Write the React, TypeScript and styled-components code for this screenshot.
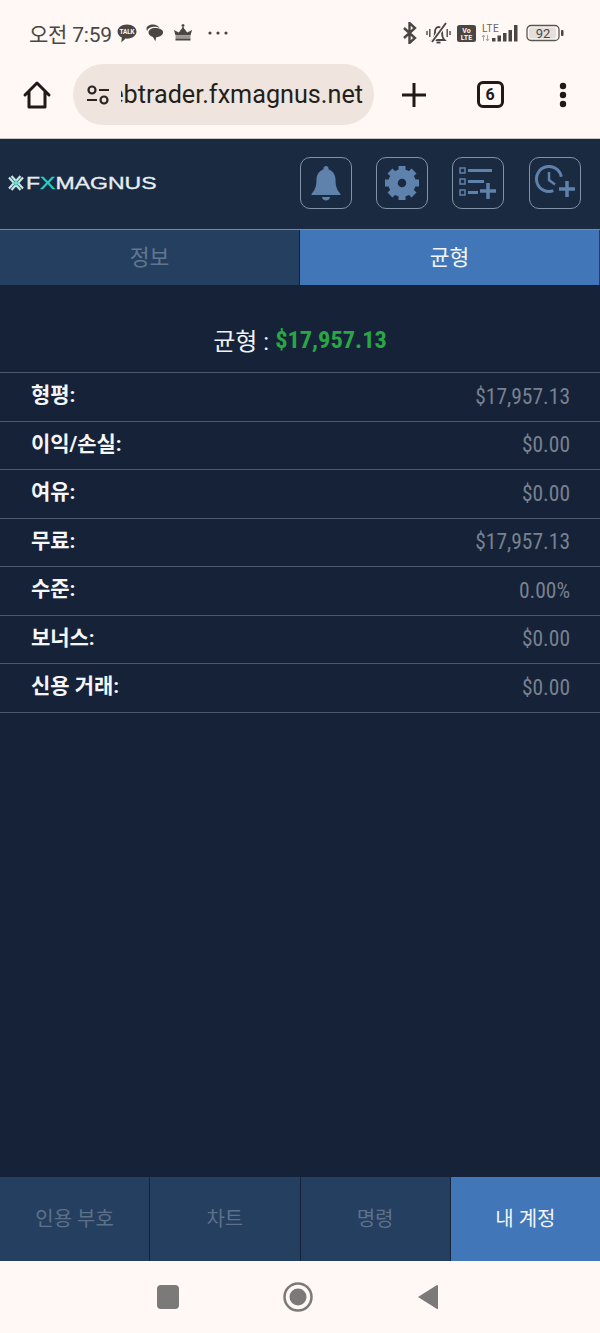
import styled, { createGlobalStyle } from "styled-components";

const GlobalStyle = createGlobalStyle`
  html, body {
    margin: 0;
    padding: 0;
    background: #fff8f5;
  }
  body {
    font-family: Roboto, "Noto Sans CJK KR", sans-serif;
  }
`;

const Page = styled.div`
  width: 600px;
  height: 1333px;
  display: flex;
  flex-direction: column;
  overflow: hidden;
  background: #162238;
`;

const StatusBar = styled.div`
  height: 64px;
  flex: none;
  box-sizing: border-box;
  padding: 2px 35px 0 29px;
  background: #fff8f5;
  display: flex;
  align-items: center;
  justify-content: space-between;
  color: #4a4644;
`;

const StatusGroup = styled.div`
  display: flex;
  align-items: center;
`;

const Clock = styled.span`
  font-size: 21px;
  letter-spacing: -0.2px;
  margin-right: 3px;
  white-space: nowrap;
`;

const BrowserBar = styled.div`
  height: 75px;
  flex: none;
  box-sizing: border-box;
  background: #fff8f5;
  border-bottom: 1px solid #c9c6c4;
  padding-bottom: 13px;
  display: flex;
  align-items: center;
`;

const HomeSlot = styled.div`
  width: 73px;
  flex: none;
  display: flex;
  justify-content: center;
`;

const UrlPill = styled.div`
  width: 301px;
  height: 61px;
  flex: none;
  box-sizing: border-box;
  border-radius: 31px;
  background: #efe5de;
  padding: 0 11px 0 12px;
  display: flex;
  align-items: center;
`;

const UrlText = styled.div`
  flex: 1;
  min-width: 0;
  margin-left: 10px;
  overflow: hidden;
  white-space: nowrap;
  direction: rtl;
  font-size: 25.2px;
  color: #241f1c;
  text-align: left;
`;

const BrowserAction = styled.div<{ $width: number }>`
  width: ${(p) => p.$width}px;
  flex: none;
  display: flex;
  justify-content: center;
`;

const TabCount = styled.div`
  width: 27px;
  height: 27px;
  box-sizing: border-box;
  border: 3px solid #1f1a17;
  border-radius: 6px;
  font-size: 16px;
  font-weight: 700;
  color: #1f1a17;
  display: flex;
  align-items: center;
  justify-content: center;
`;

const Header = styled.div`
  height: 90px;
  flex: none;
  box-sizing: border-box;
  background: #1a2a41;
  padding: 0 19.2px 2px 8px;
  display: flex;
  align-items: center;
  justify-content: space-between;
`;

const Logo = styled.div`
  display: flex;
  align-items: center;
  gap: 2px;
  font-family: "Liberation Sans", Arial, sans-serif;
`;

const LogoWord = styled.span`
  font-size: 18px;
  color: #e6edf1;
  -webkit-text-stroke: 0.35px currentColor;
  display: inline-block;
  transform-origin: left center;
  transform: scale(1.28, 0.95);
  white-space: nowrap;
`;

const LogoX = styled.span`
  color: #2fcfc0;
`;

const HeaderButtons = styled.div`
  display: flex;
  gap: 24.4px;
`;

const HeaderButton = styled.div`
  width: 52px;
  height: 52px;
  box-sizing: border-box;
  border: 1px solid #8292a5;
  border-radius: 10px;
  display: flex;
  align-items: center;
  justify-content: center;
`;

const TabRow = styled.div`
  height: 56px;
  flex: none;
  box-sizing: border-box;
  border-top: 1px solid #7f8b9a;
  display: flex;
`;

const Tab = styled.div<{ $active?: boolean }>`
  flex: 1;
  font-size: 21.5px;
  padding-bottom: 5px;
  display: flex;
  align-items: center;
  justify-content: center;
  background: ${(p) => (p.$active ? "#4177b8" : "#253f60")};
  color: ${(p) => (p.$active ? "#f2f6fa" : "#62778f")};
  border-left: ${(p) => (p.$active ? "1px solid #15233a" : "0")};
  border-right: ${(p) => (p.$active ? "1px solid #253f60" : "0")};
`;

const Content = styled.div`
  flex: 1;
  min-height: 0;
  background: #162238;
`;

const BalanceTitle = styled.div`
  height: 87px;
  box-sizing: border-box;
  padding-top: 22px;
  display: flex;
  align-items: center;
  justify-content: center;
  gap: 6px;
  font-size: 24px;
  color: #eef2f5;
`;

const Condensed = styled.span`
  font-family: Roboto, sans-serif;
  font-stretch: 75%;
  display: inline-block;
`;

const BalanceAmount = styled(Condensed)`
  font-size: 24.4px;
  font-weight: 700;
  color: #28a745;
`;

const InfoRow = styled.div`
  height: 48.5px;
  box-sizing: border-box;
  border-top: 1px solid #4c5a70;
  padding: 0 30px 1px 31px;
  display: flex;
  align-items: center;
  justify-content: space-between;

  &:last-child {
    height: 49.5px;
    border-bottom: 1px solid #4c5a70;
  }
`;

const InfoLabel = styled.span`
  font-size: 21px;
  font-weight: 700;
  color: #f4f6f8;
  letter-spacing: -0.05px;
  margin-bottom: 6px;
`;

const InfoValue = styled(Condensed)`
  font-size: 21.5px;
  color: #78818f;
`;

const BottomNav = styled.div`
  height: 84px;
  flex: none;
  display: flex;
`;

const NavItem = styled.div<{ $active?: boolean }>`
  flex: 1;
  font-size: 20px;
  padding-bottom: 3px;
  display: flex;
  align-items: center;
  justify-content: center;
  background: ${(p) => (p.$active ? "#4177b8" : "#253f60")};
  color: ${(p) => (p.$active ? "#f2f6fa" : "#5e7189")};
  border-right: ${(p) => (p.$active ? "0" : "1px solid #15233a")};
`;

const SystemNav = styled.div`
  height: 72px;
  flex: none;
  box-sizing: border-box;
  background: #fff8f5;
  padding: 0 161px 0 157px;
  display: flex;
  align-items: center;
  justify-content: space-between;
`;

const SystemSquare = styled.div`
  width: 22px;
  height: 24px;
  border-radius: 4px;
  background: #7c7a79;
`;

const KakaoIcon = () => (
  <svg width="24" height="22" viewBox="0 0 24 22">
    <path d="M12 2.500C6.500 2.500 2.500 5.700 2.500 9.600c0 2.600 1.700 4.800 4.300 6l-.5 4.900 4.300-3.900c.5.100.9.100 1.400.100 5.500 0 9.500-3.200 9.500-7.100S17.500 2.500 12 2.500z" fill="#4a4644" />
    <text x="12" y="12.200" fontSize="6.300" fontWeight="700" textAnchor="middle" fill="#fff8f5" fontFamily="Roboto, sans-serif">TALK</text>
  </svg>
);

const ChatIcon = () => (
  <svg width="20" height="20" viewBox="0 0 20 20" style={{ marginLeft: 6.5 }}>
    <path d="M8 1.500c-3.500 0-6.500 1.700-6.500 4.300 0 .8.300 1.500.7 2.100C3 5 6.200 3.800 9.500 3.800c2 0 3.600.4 5 1.100C13.300 2.900 10.900 1.500 8 1.500z" fill="#4a4644" />
    <path d="M10 5C6.500 5 3.500 6.800 3.500 9.500c0 2.100 1.900 3.800 4.500 4.400l2.300 4.400.9-4.100c3.800-.2 6.800-2.100 6.800-4.700C18.500 6.800 14.500 5 10 5z" fill="#4a4644" />
  </svg>
);

const CrownIcon = () => (
  <svg width="20" height="18" viewBox="0 0 20 18" style={{ marginLeft: 7.5 }}>
    <path d="M2.500 11.500 1 6l4.800 2.500L10 3l4.200 5.500L19 6l-1.500 5.500z" fill="#4a4644" />
    <path d="M10 0v4M8.500 1.500h3" stroke="#4a4644" strokeWidth="1.300" />
    <rect x="2.500" y="12" width="15" height="2.500" fill="#9c9794" />
    <rect x="2.500" y="14.500" width="15" height="2" fill="#4a4644" />
  </svg>
);

const MoreDots = () => (
  <svg width="22" height="6" viewBox="0 0 22 6" style={{ marginLeft: 14.5 }}>
    <circle cx="3" cy="3" r="1.600" fill="#4a4644" />
    <circle cx="11" cy="3" r="1.600" fill="#4a4644" />
    <circle cx="19" cy="3" r="1.600" fill="#4a4644" />
  </svg>
);

const BluetoothIcon = () => (
  <svg width="16" height="22" viewBox="0 0 16 22">
    <path d="M2 6l11 10-5.500 5V1L13 6 2 16" fill="none" stroke="#4a4644" strokeWidth="2.400" />
  </svg>
);

const MutedBellIcon = () => (
  <svg width="25" height="22" viewBox="0 0 25 22" style={{ marginLeft: 8 }}>
    <path d="M7.500 17c1.300-2 1.500-4 1.500-7 0-3 1.700-5 3.500-5S16 7 16 10c0 3 .2 5 1.500 7l1 1h-12z" fill="none" stroke="#4a4644" strokeWidth="1.900" />
    <path d="M10.500 20.500h4" stroke="#4a4644" strokeWidth="1.900" />
    <path d="M6 20 20 1" stroke="#fff8f5" strokeWidth="4" />
    <path d="M6 20 20 1" stroke="#4a4644" strokeWidth="1.900" />
    <path d="M1 9v4M3.800 7v8M21.200 7v8M24 9v4" stroke="#4a4644" strokeWidth="1.400" />
  </svg>
);

const VoLteIcon = () => (
  <svg width="19" height="17" viewBox="0 0 19 17" style={{ marginLeft: 6 }}>
    <rect width="19" height="17" rx="2.500" fill="#4a4644" />
    <text x="9.500" y="7.500" fontSize="7" fontWeight="700" textAnchor="middle" fill="#fff8f5" fontFamily="Roboto, sans-serif">Vo</text>
    <text x="9.500" y="15" fontSize="7" fontWeight="700" textAnchor="middle" fill="#fff8f5" fontFamily="Roboto, sans-serif">LTE</text>
  </svg>
);

const SignalIcon = () => (
  <svg width="38" height="20" viewBox="0 0 38 20" style={{ marginLeft: 5 }}>
    <text x="1" y="9" fontSize="10" fill="#6a6663" fontFamily="Roboto, sans-serif" letterSpacing="0.500">LTE</text>
    <path d="M2.500 12v6M1 14l1.500-2 1.500 2M6.500 12v6M5 16l1.500 2 1.500-2" stroke="#aaa6a3" strokeWidth="1" fill="none" />
    <rect x="11" y="15" width="3.500" height="3.500" fill="#4a4644" />
    <rect x="16.500" y="12.500" width="3.500" height="6" fill="#4a4644" />
    <rect x="22" y="10" width="3.500" height="8.500" fill="#4a4644" />
    <rect x="27.500" y="7" width="3.500" height="11.500" fill="#4a4644" />
    <rect x="33" y="2" width="3.500" height="16.500" fill="#4a4644" />
  </svg>
);

const BatteryIcon = () => (
  <svg width="39" height="18" viewBox="0 0 39 18" style={{ marginLeft: 7 }}>
    <rect x="1" y="1.500" width="32" height="15" rx="4" fill="#fff8f5" stroke="#5a5653" strokeWidth="1.300" />
    <rect x="3" y="3.500" width="27" height="11" rx="2" fill="#e2dfdc" />
    <rect x="35" y="6" width="2.500" height="6" rx="1" fill="#4a4644" />
    <text x="17" y="13.500" fontSize="13" textAnchor="middle" fill="#4a4644" fontFamily="Roboto, sans-serif">92</text>
  </svg>
);

const HomeIcon = () => (
  <svg width="30" height="30" viewBox="0 0 30 30">
    <path d="M3 15 15 3l12 12M7 12v15h16V12" fill="none" stroke="#1f1a17" strokeWidth="3" strokeLinejoin="round" strokeLinecap="round" />
  </svg>
);

const TuneIcon = () => (
  <svg width="26" height="22" viewBox="0 0 26 22">
    <circle cx="7" cy="6" r="3.500" fill="none" stroke="#2a2522" strokeWidth="2.200" />
    <path d="M14 6h10M2 16h10" stroke="#2a2522" strokeWidth="2.200" />
    <circle cx="19" cy="16" r="3.500" fill="none" stroke="#2a2522" strokeWidth="2.200" />
  </svg>
);

const PlusIcon = () => (
  <svg width="26" height="26" viewBox="0 0 26 26">
    <path d="M13 1v24M1 13h24" stroke="#1f1a17" strokeWidth="3" />
  </svg>
);

const KebabIcon = () => (
  <svg width="8" height="26" viewBox="0 0 8 26">
    <circle cx="4" cy="4" r="3.200" fill="#1f1a17" />
    <circle cx="4" cy="13" r="3.200" fill="#1f1a17" />
    <circle cx="4" cy="22" r="3.200" fill="#1f1a17" />
  </svg>
);

const LogoMark = () => (
  <svg width="16" height="16" viewBox="0 0 16 16">
    <path d="M1 2.500 6 8l-5 5.500M3.500 1 8 6l4.500-5M15 2.500 10 8l5 5.500M3.500 15 8 10l4.500 5" fill="none" stroke="#c4e6e6" strokeWidth="2.200" />
    <path d="M8 5l3 3-3 3-3-3z" fill="#2fcfc0" />
    <path d="M4.500 8h7M8 4.500v7" stroke="#9be4de" strokeWidth="0.800" />
  </svg>
);

const BellIcon = () => (
  <svg width="32" height="36" viewBox="0 0 32 36">
    <path d="M16 1c1.500 0 2.500 1 2.500 2.500v.8C23 6 25.500 10 25.500 14.500c0 6 1 10 5 14.500V30H1.500v-1c4-4.500 5-8.500 5-14.500C6.500 10 9 6 13.500 4.300v-.8C13.500 2 14.500 1 16 1z" fill="#5e82ac" />
    <path d="M12 32h8c0 2-2 3.500-4 3.500S12 34 12 32z" fill="#5e82ac" />
  </svg>
);

const gearAngles = [0, 45, 90, 135, 180, 225, 270, 315];

const GearIcon = () => (
  <svg width="36" height="36" viewBox="0 0 36 36">
    <circle cx="18" cy="18" r="9" fill="none" stroke="#5e82ac" strokeWidth="9.500" />
    {gearAngles.map((angle) => (
      <rect key={angle} x="14.500" y="1" width="7" height="8" fill="#5e82ac" transform={`rotate(${angle} 18 18)`} />
    ))}
  </svg>
);

const ListPlusIcon = () => (
  <svg width="38" height="34" viewBox="0 0 38 34">
    <rect x="1" y="2" width="5" height="5" fill="none" stroke="#5e82ac" strokeWidth="1.500" />
    <rect x="1" y="13" width="5" height="5" fill="none" stroke="#5e82ac" strokeWidth="1.500" />
    <rect x="1" y="24" width="5" height="5" fill="none" stroke="#5e82ac" strokeWidth="1.500" />
    <path d="M9 4.500h24M9 15.500h16M9 26.500h10" stroke="#5e82ac" strokeWidth="3" />
    <path d="M29 17v16M21 25h16" stroke="#5e82ac" strokeWidth="3.500" />
  </svg>
);

const ClockPlusIcon = () => (
  <svg width="40" height="36" viewBox="0 0 40 36">
    <path d="M18.300 25.700A12.500 12.500 0 1 1 26.300 11.800" fill="none" stroke="#5e82ac" strokeWidth="3" />
    <path d="M14 7v8l6 4.500" fill="none" stroke="#5e82ac" strokeWidth="2.500" />
    <path d="M32 16v16M24 24h16" stroke="#5e82ac" strokeWidth="3.500" />
  </svg>
);

const SystemHome = () => (
  <svg width="30" height="30" viewBox="0 0 30 30">
    <circle cx="15" cy="15" r="13.500" fill="none" stroke="#7c7a79" strokeWidth="2.500" />
    <circle cx="15" cy="15" r="8.500" fill="#7c7a79" />
  </svg>
);

const SystemBack = () => (
  <svg width="22" height="26" viewBox="0 0 22 26">
    <path d="M21 1.500v23c0 .5-.5.8-1 .5L1 13 20 1c.5-.3 1 0 1 .5z" fill="#7c7a79" />
  </svg>
);

const rows = [
  { label: "형평:", value: "$17,957.13" },
  { label: "이익/손실:", value: "$0.00" },
  { label: "여유:", value: "$0.00" },
  { label: "무료:", value: "$17,957.13" },
  { label: "수준:", value: "0.00%" },
  { label: "보너스:", value: "$0.00" },
  { label: "신용 거래:", value: "$0.00" },
];

const navItems = ["인용 부호", "차트", "명령", "내 계정"];

const App = () => (
  <>
    <GlobalStyle />
    <Page>
      <StatusBar>
        <StatusGroup>
          <Clock>오전 7:59</Clock>
          <KakaoIcon />
          <ChatIcon />
          <CrownIcon />
          <MoreDots />
        </StatusGroup>
        <StatusGroup>
          <BluetoothIcon />
          <MutedBellIcon />
          <VoLteIcon />
          <SignalIcon />
          <BatteryIcon />
        </StatusGroup>
      </StatusBar>
      <BrowserBar>
        <HomeSlot>
          <HomeIcon />
        </HomeSlot>
        <UrlPill>
          <TuneIcon />
          <UrlText>
            <bdi>webtrader.fxmagnus.net</bdi>
          </UrlText>
        </UrlPill>
        <BrowserAction $width={80}>
          <PlusIcon />
        </BrowserAction>
        <BrowserAction $width={72}>
          <TabCount>6</TabCount>
        </BrowserAction>
        <BrowserAction $width={74}>
          <KebabIcon />
        </BrowserAction>
      </BrowserBar>
      <Header>
        <Logo>
          <LogoMark />
          <LogoWord>
            F<LogoX>X</LogoX>MAGNUS
          </LogoWord>
        </Logo>
        <HeaderButtons>
          <HeaderButton>
            <BellIcon />
          </HeaderButton>
          <HeaderButton>
            <GearIcon />
          </HeaderButton>
          <HeaderButton>
            <ListPlusIcon />
          </HeaderButton>
          <HeaderButton>
            <ClockPlusIcon />
          </HeaderButton>
        </HeaderButtons>
      </Header>
      <TabRow>
        <Tab>정보</Tab>
        <Tab $active>균형</Tab>
      </TabRow>
      <Content>
        <BalanceTitle>
          <span>균형 :</span>
          <BalanceAmount>$17,957.13</BalanceAmount>
        </BalanceTitle>
        {rows.map((row) => (
          <InfoRow key={row.label}>
            <InfoLabel>{row.label}</InfoLabel>
            <InfoValue>{row.value}</InfoValue>
          </InfoRow>
        ))}
      </Content>
      <BottomNav>
        {navItems.map((item, idx) => (
          <NavItem key={item} $active={idx === navItems.length - 1}>
            {item}
          </NavItem>
        ))}
      </BottomNav>
      <SystemNav>
        <SystemSquare />
        <SystemHome />
        <SystemBack />
      </SystemNav>
    </Page>
  </>
);

export default App;
